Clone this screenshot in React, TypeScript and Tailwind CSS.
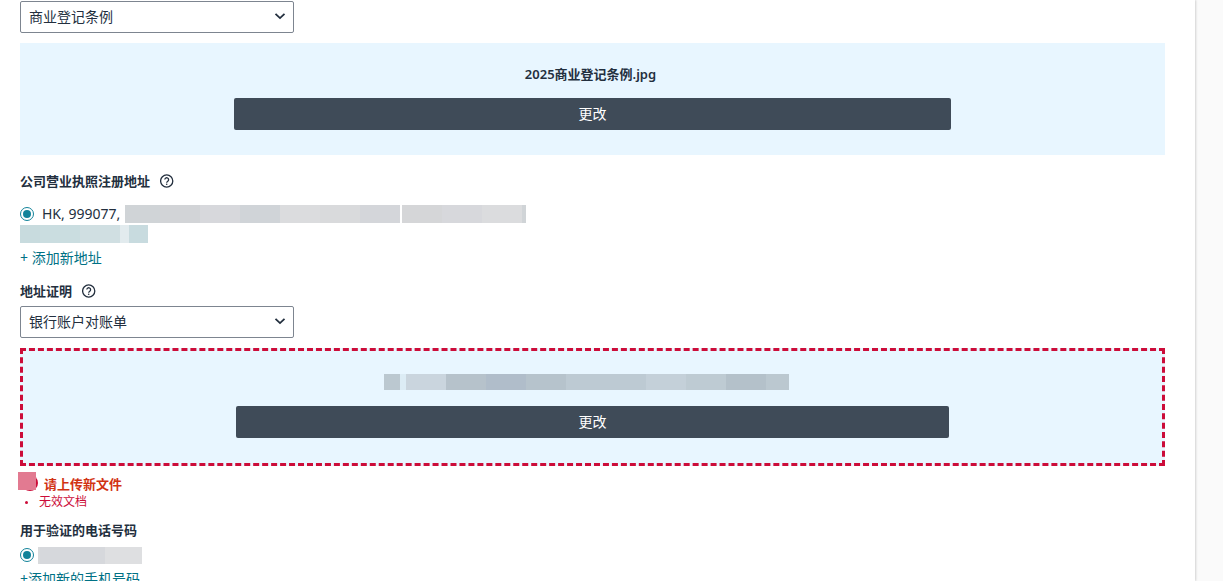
import {useState} from "react";
import type {ReactNode} from "react";

type Block = string;

const ADDRESS_BLOCKS: Block[] = [
    "w-[35px] bg-[#d0d4d7]",
    "w-10 bg-[#d2d4d7]",
    "w-10 bg-[#d7d8dc]",
    "w-10 bg-[#d0d4d8]",
    "w-10 bg-[#dbdcde]",
    "w-10 bg-[#d9dadc]",
    "w-10 bg-[#d4d6da]",
    "w-[2px] bg-white",
    "w-10 bg-[#d5d6d8]",
    "w-10 bg-[#d7d8dc]",
    "w-10 bg-[#dbdcde]",
    "w-1 bg-[#d0d4d7]",
];

const ADDRESS_LINK_BLOCKS: Block[] = [
    "w-5 bg-[#c8dbde]",
    "w-10 bg-[#cadde0]",
    "w-10 bg-[#d0dfe2]",
    "w-[9px] bg-[#e2ebee]",
    "w-[19px] bg-[#c8dbdf]",
];

const FILE_BLOCKS: Block[] = [
    "w-4 bg-[#bbc8d0]",
    "w-[6px] bg-[#dcecf5]",
    "w-10 bg-[#cad5de]",
    "w-10 bg-[#b6c2cb]",
    "w-10 bg-[#b0bdca]",
    "w-10 bg-[#b6c3cc]",
    "w-20 bg-[#bdcad3]",
    "w-10 bg-[#c4d0d9]",
    "w-10 bg-[#becbd3]",
    "w-10 bg-[#b4c1ca]",
    "w-[23px] bg-[#bbc8d0]",
];

const PHONE_BLOCKS: Block[] = [
    "w-[2px] bg-[#d9dbdd]",
    "w-[65px] bg-[#d6d8dc]",
    "w-[37px] bg-[#dedfe1]",
];

function Redacted({blocks, className}: {blocks: Block[]; className: string}) {
    return (
        <span className={`flex ${className}`} aria-hidden="true">
            {blocks.map((block, i) => (
                <span key={i} className={`h-full shrink-0 ${block}`}/>
            ))}
        </span>
    );
}

function HelpIcon() {
    return (
        <button type="button" aria-label="帮助" className="ml-2.5 text-[#232f3e]">
            <svg viewBox="0 0 14 14" className="size-3.5" fill="none" stroke="currentColor">
                <circle cx="6.7" cy="7" r="6.1" strokeWidth="1.3"/>
                <path d="M4.8 5.6a1.9 1.9 0 1 1 3 1.6C7.1 7.6 6.7 7.9 6.7 8.7" strokeWidth="1.3"/>
                <circle cx="6.7" cy="10.3" r="0.8" fill="currentColor" stroke="none"/>
            </svg>
        </button>
    );
}

function SelectBox({id, label, options}: {id: string; label: string; options: string[]}) {
    const [value, setValue] = useState(options[0]);

    return (
        <div className="relative w-[274px] max-w-full">
            <select
                id={id}
                aria-label={label}
                value={value}
                onChange={(e) => setValue(e.target.value)}
                className="block h-8 w-full appearance-none rounded-xs border border-[#7d8590] bg-white pr-8 pl-2 text-sm text-[#232f3e]"
            >
                {options.map((option) => (
                    <option key={option}>{option}</option>
                ))}
            </select>
            <svg
                viewBox="0 0 12 8"
                className="pointer-events-none absolute top-[11px] right-2 h-2 w-3 text-[#232f3e]"
                fill="none"
                stroke="currentColor"
                strokeWidth="1.8"
            >
                <path d="M1.5 1.8 6 6.1l4.5-4.3"/>
            </svg>
        </div>
    );
}

function Radio({id, name, label}: {id: string; name: string; label?: string}) {
    return (
        <input
            type="radio"
            id={id}
            name={name}
            aria-label={label}
            defaultChecked
            className="size-3.5 shrink-0 appearance-none rounded-full border border-[#12839a] bg-white bg-clip-content p-[2px] checked:bg-[#12839a]"
        />
    );
}

function UploadBox({children, invalid}: {children: ReactNode; invalid?: boolean}) {
    return (
        <div
            className={`mt-2.5 flex flex-col items-center bg-[#e8f6ff] pb-[25px] ${
                invalid ? "border-3 border-dashed border-[#cc0c39]" : ""
            }`}
        >
            <div className="mr-1 flex h-[55px] items-center pt-1.5">{children}</div>
            <button
                type="button"
                className="h-8 w-[62.6%] rounded-xs bg-[#3f4b58] text-sm text-white hover:bg-[#232f3e]"
            >
                更改
            </button>
        </div>
    );
}

export default function App() {
    return (
        <div className="flex h-screen overflow-hidden bg-[#fafafa] pr-7 font-['Noto_Sans','Noto_Sans_CJK_SC',sans-serif] text-[#232f3e]">
            <main className="h-full min-w-0 flex-1 overflow-hidden bg-white pt-px pr-[30px] pl-5 shadow-[1px_0_2px_rgba(0,0,0,0.16)]">
                <SelectBox id="license-type" label="商业登记条例" options={["商业登记条例"]}/>

                <UploadBox>
                    <p className="text-[13px] leading-5 font-semibold">2025商业登记条例.jpg</p>
                </UploadBox>

                <section className="mt-4">
                    <div className="flex h-5 items-center">
                        <h2 className="text-[13px] leading-5 font-bold">公司营业执照注册地址</h2>
                        <HelpIcon/>
                    </div>
                    <div className="mt-3.5 flex h-[18px] items-center">
                        <Radio id="address" name="address"/>
                        <label htmlFor="address" className="ml-2 flex items-center text-sm leading-5">
                            HK, 999077,
                            <Redacted blocks={ADDRESS_BLOCKS} className="ml-[5px] h-[18px]"/>
                        </label>
                    </div>
                    <Redacted blocks={ADDRESS_LINK_BLOCKS} className="mt-0.5 h-[18px]"/>
                    <a href="#" className="mt-[5px] block w-fit text-sm leading-5 text-[#007185]">
                        + 添加新地址
                    </a>
                </section>

                <section className="mt-[13px]">
                    <div className="mb-[5px] flex h-5 items-center">
                        <label htmlFor="proof-type" className="text-[13px] leading-5 font-bold">
                            地址证明
                        </label>
                        <HelpIcon/>
                    </div>
                    <SelectBox id="proof-type" label="地址证明" options={["银行账户对账单"]}/>

                    <UploadBox invalid>
                        <Redacted blocks={FILE_BLOCKS} className="mr-2 h-4"/>
                    </UploadBox>

                    <div className="mt-2 flex h-5 items-center text-[#d13212]">
                        <span className="relative mr-1.5 -ml-0.5 h-5 w-5 shrink-0">
                            <span className="absolute top-px right-0 size-4 rounded-full bg-[#cc0c39]"/>
                            <span className="absolute -top-0.5 left-0 size-[18px] bg-[#e27a91]"/>
                        </span>
                        <strong className="text-[13px] leading-5 font-bold">请上传新文件</strong>
                    </div>
                    <ul className="text-xs leading-4 text-[#cc0c39]">
                        <li className="flex items-center pl-[5px]">
                            <span className="mr-[11px] size-[3px] rounded-full bg-[#cc0c39]"/>
                            无效文档
                        </li>
                    </ul>
                </section>

                <section className="mt-2.5">
                    <h2 className="text-[13px] leading-5 font-bold">用于验证的电话号码</h2>
                    <div className="mt-1.5 flex h-[18px] items-center">
                        <Radio id="phone" name="phone" label="电话号码"/>
                        <label htmlFor="phone" className="ml-1">
                            <Redacted blocks={PHONE_BLOCKS} className="h-[17px]"/>
                        </label>
                    </div>
                    <a href="#" className="mt-[5px] block w-fit text-sm leading-5 text-[#007185]">
                        +添加新的手机号码
                    </a>
                </section>
            </main>
        </div>
    );
}
